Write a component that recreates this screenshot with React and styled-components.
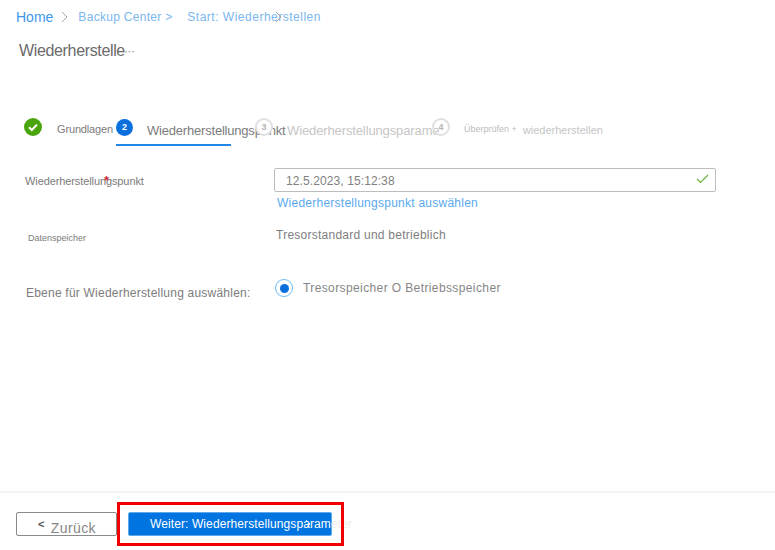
import React from 'react';
import styled, { createGlobalStyle } from 'styled-components';

const GlobalStyle = createGlobalStyle`
  html, body {
    margin: 0;
    padding: 0;
    background: #fff;
    font-family: "Liberation Sans", Arial, sans-serif;
  }
`;

const Page = styled.div`
  position: relative;
  width: 775px;
  height: 550px;
  overflow: hidden;
  display: flex;
  flex-direction: column;
  background: #fff;
`;

const Breadcrumb = styled.nav`
  display: flex;
  align-items: center;
  height: 16px;
  padding: 9px 0 0 16px;
  font-size: 12px;
  letter-spacing: 0.3px;
  color: #7ab6ef;
  white-space: nowrap;
`;

const HomeLink = styled.span`
  font-size: 14px;
  letter-spacing: 0;
  color: #3d97ea;
`;

const Crumb = styled.span`
  margin-left: ${p => p.$left}px;
  width: ${p => p.$width}px;
  letter-spacing: ${p => p.$spacing || 0.3}px;
  position: relative;
`;

const Chevron = styled.svg`
  flex: none;
  width: 7px;
  height: 12px;
  margin-left: ${p => p.$left || 0}px;
  fill: none;
  stroke: #a6a6a6;
  stroke-width: 1;
`;

const OverlapChevron = styled(Chevron)`
  position: absolute;
  left: 88px;
  top: 1px;
  margin: 0;
`;

const Title = styled.h1`
  margin: 17px 0 0 19px;
  height: 18px;
  font-size: 16px;
  line-height: 18px;
  font-weight: 400;
  letter-spacing: -0.35px;
  color: #6a6a6a;
  display: flex;
`;

const TitleText = styled.span`
  white-space: nowrap;
`;

const Ellipsis = styled.span`
  margin-left: -1px;
  font-size: 12px;
  letter-spacing: -0.5px;
  color: #888;
`;

const Steps = styled.div`
  display: flex;
  align-items: flex-start;
  height: 28px;
  margin-top: 58px;
  padding-left: 24px;
  white-space: nowrap;
`;

const Step = styled.div`
  display: flex;
  align-items: center;
  flex: none;
  width: ${p => p.$width}px;
  height: ${p => (p.$active ? 28 : 18)}px;
  align-self: flex-start;
  box-sizing: border-box;
  margin-left: ${p => p.$left || 0}px;
  ${p => p.$active && 'border-bottom: 2px solid #2088e4; padding-bottom: 8px;'}
`;

const StepCircle = styled.span`
  flex: none;
  position: relative;
  z-index: 1;
  box-sizing: border-box;
  width: ${p => p.$size || 18}px;
  height: ${p => p.$size || 18}px;
  border-radius: 50%;
  display: flex;
  align-items: center;
  justify-content: center;
  font-size: 9px;
  font-weight: 700;
  background: ${p => p.$bg || 'transparent'};
  color: ${p => p.$color || '#b4b4b4'};
  border: ${p => (p.$outlined ? '2px solid #e0e0e0' : 'none')};
`;

const StepLabel = styled.span`
  margin-left: ${p => p.$left}px;
  font-size: ${p => p.$size || 13}px;
  letter-spacing: ${p => p.$spacing || 0}px;
  color: ${p => p.$color || '#7c7c7c'};
  position: relative;
  top: ${p => p.$top || 0}px;
`;

const Form = styled.div`
  display: grid;
  grid-template-columns: 249px 442px;
  padding: 22px 0 0 25px;
`;

const FieldLabel = styled.label`
  position: relative;
  font-size: ${p => p.$size || 11}px;
  letter-spacing: ${p => p.$spacing || 0}px;
  color: #7c7c7c;
  white-space: nowrap;
  padding-left: ${p => p.$indent || 0}px;
  padding-top: ${p => p.$top || 0}px;
  margin-top: ${p => p.$gap || 0}px;
`;

const Required = styled.span`
  position: absolute;
  left: 79px;
  top: 5px;
  font-size: 13px;
  font-weight: 700;
  color: #c8303a;
`;

const Field = styled.div`
  margin-top: ${p => p.$gap || 0}px;
`;

const InputBox = styled.div`
  box-sizing: border-box;
  height: 24px;
  display: flex;
  align-items: center;
  justify-content: space-between;
  padding: 2px 6px 0 11px;
  border: 1px solid #bdbdbd;
  border-radius: 2px;
  font-size: 12px;
  letter-spacing: 0.1px;
  color: #808080;
`;

const CheckMark = styled.svg`
  position: relative;
  top: -2px;
`;

const Link = styled.a`
  display: block;
  margin: 4px 0 0 3px;
  font-size: 12px;
  line-height: 14px;
  letter-spacing: 0.25px;
  color: #5aa9ef;
  white-space: nowrap;
`;

const ValueText = styled.div`
  padding-left: 2px;
  font-size: 12px;
  line-height: 14px;
  letter-spacing: 0.25px;
  color: #808080;
`;

const RadioRow = styled.div`
  display: flex;
  align-items: center;
  gap: 10px;
  margin-left: 1px;
`;

const Radio = styled.span`
  flex: none;
  box-sizing: border-box;
  width: 18px;
  height: 18px;
  border-radius: 50%;
  border: 1px solid #74baf4;
  display: flex;
  align-items: center;
  justify-content: center;
  &::after {
    content: '';
    width: 9px;
    height: 9px;
    border-radius: 50%;
    background: #0a6fdc;
  }
`;

const RadioText = styled.span`
  font-size: 12px;
  letter-spacing: 0.39px;
  color: #868686;
`;

const Footer = styled.footer`
  margin-top: auto;
  height: 59px;
  box-sizing: border-box;
  border-top: 2px solid #f4f4f4;
  display: flex;
  align-items: flex-start;
  padding: 19px 0 0 16px;
  white-space: nowrap;
`;

const BackButton = styled.button`
  box-sizing: border-box;
  width: 101px;
  height: 24px;
  padding: 0 0 0 21px;
  display: flex;
  align-items: center;
  gap: 6px;
  background: #fff;
  border: 1px solid #8a8a8a;
  border-radius: 2px;
  font: 14px "Liberation Sans", Arial, sans-serif;
  letter-spacing: 0.4px;
  color: #868686;
`;

const BackMark = styled.span`
  font-size: 11px;
  font-weight: 700;
  color: #555;
  position: relative;
  top: 0;
`;

const BackLabel = styled.span`
  position: relative;
  top: 4px;
`;

const NextButton = styled.button`
  box-sizing: border-box;
  flex: none;
  width: 204px;
  height: 24px;
  margin-left: 11px;
  padding: 0 0 0 21px;
  display: flex;
  align-items: center;
  overflow: visible;
  background: #0074e0;
  border: 1px solid #5fa8ec;
  border-radius: 2px;
  font: 12px "Liberation Sans", Arial, sans-serif;
  letter-spacing: 0.1px;
  color: #fff;
  position: relative;
  white-space: nowrap;
`;

const FadedText = styled.span`
  color: #ececec;
`;

const NextChevron = styled.svg`
  position: absolute;
  left: 176px;
  top: 6px;
  width: 6px;
  height: 10px;
  fill: none;
  stroke: #e4f0fc;
  stroke-width: 1;
`;

const Highlight = styled.div`
  position: absolute;
  left: 117px;
  top: 502px;
  width: 227px;
  height: 44px;
  box-sizing: border-box;
  border: 3px solid #f00000;
  pointer-events: none;
`;

const CheckBadge = () => (
  <svg width="18" height="18" viewBox="0 0 18 18">
    <circle cx="9" cy="9" r="9" fill="#4aa50c" />
    <path d="M5 9.2l2.8 2.8L13 6.6" fill="none" stroke="#fff" strokeWidth="2" />
  </svg>
);

export default function App() {
  return (
    <Page>
      <GlobalStyle />
      <Breadcrumb>
        <HomeLink>Home</HomeLink>
        <Chevron $left={8} viewBox="0 0 7 12">
          <path d="M1 1l5 5-5 5" />
        </Chevron>
        <Crumb $left={10} $width={109}>Backup Center &gt;</Crumb>
        <Crumb $left={0} $width={133} $spacing={0.5}>
          Start: Wiederherstellen
          <OverlapChevron viewBox="0 0 7 12">
            <path d="M1 1l5 5-5 5" />
          </OverlapChevron>
        </Crumb>
      </Breadcrumb>
      <Title>
        <TitleText>Wiederherstelle</TitleText>
        <Ellipsis>···</Ellipsis>
      </Title>

      <Steps>
        <Step $width={33}>
          <CheckBadge />
        </Step>
        <Step $width={59}>
          <StepLabel $left={0} $size={11} $spacing={-0.15} $top={2}>Grundlagen</StepLabel>
        </Step>
        <Step $active $width={115}>
          <StepCircle $size={17} $bg="#0a6fdc" $color="#fff">2</StepCircle>
          <StepLabel $left={14} $top={3} $spacing={-0.2}>Wiederherstellungspunkt</StepLabel>
        </Step>
        <Step $width={32} $left={24}>
          <StepCircle $size={18} $bg="#fff" $outlined>3</StepCircle>
        </Step>
        <Step $width={145}>
          <StepLabel $left={0} $top={3} $spacing={-0.12} $color="#c6c6c6">Wiederherstellungsparame</StepLabel>
        </Step>
        <Step $width={32}>
          <StepCircle $size={18} $outlined>4</StepCircle>
        </Step>
        <Step $width={150}>
          <StepLabel $left={0} $size={9} $top={2} $color="#bdbdbd">Überprüfen +</StepLabel>
          <StepLabel $left={6} $size={11} $top={3} $color="#c6c6c6">wiederherstellen</StepLabel>
        </Step>
      </Steps>

      <Form>
        <FieldLabel $top={7} $spacing={-0.1}>
          Wiederherstellungspunkt
          <Required>*</Required>
        </FieldLabel>
        <Field>
          <InputBox>
            12.5.2023, 15:12:38
            <CheckMark width="13" height="10" viewBox="0 0 13 10">
              <path d="M1 5l3.5 3.5L12 1" fill="none" stroke="#6cb33f" strokeWidth="1.2" />
            </CheckMark>
          </InputBox>
          <Link>Wiederherstellungspunkt auswählen</Link>
        </Field>

        <FieldLabel $size={9} $indent={3} $gap={18} $top={5}>Datenspeicher</FieldLabel>
        <Field $gap={18}>
          <ValueText>Tresorstandard und betrieblich</ValueText>
        </Field>

        <FieldLabel $size={12} $spacing={0.22} $indent={1} $gap={36} $top={7}>
          Ebene für Wiederherstellung auswählen:
        </FieldLabel>
        <Field $gap={36}>
          <RadioRow>
            <Radio />
            <RadioText>Tresorspeicher O Betriebsspeicher</RadioText>
          </RadioRow>
        </Field>
      </Form>

      <Footer>
        <BackButton>
          <BackMark>&lt;</BackMark>
          <BackLabel>Zurück</BackLabel>
        </BackButton>
        <NextButton>
          <span>Weiter: Wiederherstellungsparam<FadedText>eter</FadedText></span>
          <NextChevron viewBox="0 0 6 10">
            <path d="M1 1l4 4-4 4" />
          </NextChevron>
        </NextButton>
      </Footer>
      <Highlight />
    </Page>
  );
}
